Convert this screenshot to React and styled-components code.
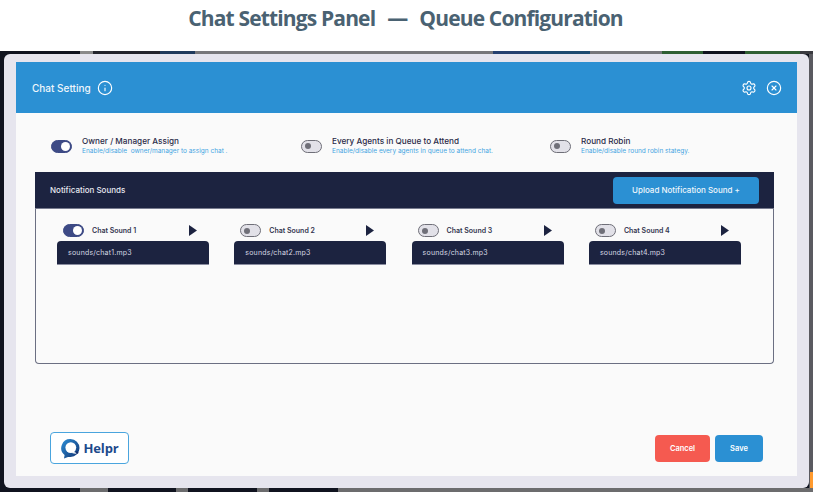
import React from 'react';
import styled, { createGlobalStyle } from 'styled-components';
import { Info, Settings, CircleX } from 'lucide-react';

const GlobalStyle = createGlobalStyle`
  html, body {
    margin: 0;
    padding: 0;
    background: #fff;
  }
  body {
    font-family: Inter, 'Liberation Sans', sans-serif;
  }
  * {
    box-sizing: border-box;
  }
`;

const Page = styled.div`
  width: 816px;
  height: 492px;
  display: flex;
  flex-direction: column;
  overflow: hidden;
  background: #fff;
`;

const PageTitle = styled.h1`
  height: 51px;
  margin: 0;
  padding: 0 5px 16px 0;
  display: flex;
  align-items: center;
  justify-content: center;
  gap: 12px;
  font-family: 'Open Sans', sans-serif;
  font-size: 21px;
  font-weight: 700;
  letter-spacing: -0.85px;
  color: #4a6272;
  white-space: nowrap;
`;

const Backdrop = styled.div`
  width: 813px;
  flex: 1;
  display: flex;
  padding: 3px 4px 4px 4px;
  background-color: #10131f;
  background-image:
    linear-gradient(90deg, #10131f 80px, #8a8a8a 80px, #8a8a8a 93px, #23242c 93px, #23242c 160px, #1f3a5c 160px, #1f3a5c 195px, #77777a 195px, #77777a 493px, #24406f 493px, #24406f 530px, #1c4a70 530px, #1c4a70 590px, #77777a 590px, #77777a 662px, #2f5f33 662px, #2f5f33 703px, #10131f 703px, #10131f 745px, #2f5f33 745px, #2f5f33 800px, #3a3a40 800px),
    linear-gradient(90deg, #10131f 80px, #6c6c6e 80px, #6c6c6e 108px, #10131f 108px, #10131f 176px, #6c6c6e 176px, #6c6c6e 188px, #10131f 188px, #10131f 257px, #6c6c6e 257px, #6c6c6e 269px, #10131f 269px, #10131f 338px, #6c6c6e 338px),
    linear-gradient(#ff9a2e, #ff9a2e),
    linear-gradient(#5a5a60, #5a5a60);
  background-size: 100% 3px, 100% 4px, 3px 20px, 4px 100%;
  background-position: top left, bottom left, bottom right, top right;
  background-repeat: no-repeat;
`;

const Modal = styled.div`
  flex: 1;
  display: flex;
  flex-direction: column;
  padding: 8px 12px 12px;
  background: #e6e5ee;
  border-radius: 6px;
`;

const ModalHeader = styled.header`
  height: 51px;
  flex: none;
  display: flex;
  align-items: center;
  padding: 0 15px 0 16px;
  background: #2b90d3;
  color: #fff;
`;

const ModalTitle = styled.span`
  font-size: 10px;
  font-weight: 500;
  color: #eef6fc;
`;

const InfoIcon = styled(Info)`
  margin-left: 6px;
`;

const CloseIcon = styled(CircleX)`
  margin-left: 9px;
`;

const Spacer = styled.div`
  flex: 1;
`;

const ModalBody = styled.div`
  flex: 1;
  display: flex;
  flex-direction: column;
  padding: 24px 23px 12px 19px;
  background: #fafafa;
`;

const OptionRow = styled.div`
  display: grid;
  grid-template-columns: 250px 249px 1fr;
  padding-left: 16px;
  height: 36px;
`;

const Option = styled.div`
  display: flex;
  align-items: center;
  height: 18px;
  gap: 10px;
`;

const OptionText = styled.div`
  display: flex;
  flex-direction: column;
  gap: 2px;
  margin-bottom: 2px;
`;

const OptionLabel = styled.div`
  font-size: 8.2px;
  line-height: 10px;
  font-weight: 500;
  color: #2a2b48;
  white-space: nowrap;
`;

const OptionHint = styled.div`
  font-size: 6.5px;
  line-height: 7px;
  color: #45a5e2;
  white-space: pre;
`;

const Track = styled.span`
  flex: none;
  display: flex;
  align-items: center;
  justify-content: ${(props) => (props.$on ? 'flex-end' : 'flex-start')};
  width: 21px;
  height: 13px;
  padding: 0 1px 0 3px;
  border-radius: 7px;
  background: ${(props) => (props.$on ? '#3d4a85' : '#e2e1e8')};
  border: 1px solid ${(props) => (props.$on ? '#3d4a85' : '#6f6f78')};
`;

const Knob = styled.span`
  border-radius: 50%;
  width: ${(props) => (props.$on ? 9 : 6)}px;
  height: ${(props) => (props.$on ? 9 : 6)}px;
  background: ${(props) => (props.$on ? '#fff' : '#6f6f78')};
`;

const Panel = styled.section`
  height: 192px;
  flex: none;
  margin-top: -1px;
  display: flex;
  flex-direction: column;
  border: 1px solid #6b6f82;
  border-top: none;
  border-radius: 0 0 4px 4px;
`;

const PanelHeader = styled.div`
  height: 37px;
  flex: none;
  display: flex;
  align-items: center;
  justify-content: space-between;
  margin: 0 -1px;
  padding: 0 15px;
  background: #1c2340;
  border-bottom: 1px solid #777b8e;
`;

const PanelTitle = styled.span`
  font-size: 8px;
  font-weight: 500;
  color: #e8e9f0;
`;

const UploadButton = styled.button`
  width: 146px;
  height: 27px;
  padding: 0;
  border: none;
  border-radius: 4px;
  background: #2b90d3;
  color: #eef6fc;
  font-family: inherit;
  font-size: 8px;
  font-weight: 500;
`;

const SoundGrid = styled.div`
  display: grid;
  grid-template-columns: repeat(4, 152px);
  column-gap: 25.3px;
  padding: 14px 0 0 21px;
`;

const SoundCard = styled.div`
  display: flex;
  flex-direction: column;
`;

const SoundHead = styled.div`
  height: 18px;
  display: flex;
  align-items: center;
  padding: 0 12px 3px 6px;
  gap: 8px;
`;

const SoundName = styled.span`
  flex: 1;
  font-size: 7px;
  font-weight: 600;
  color: #33354f;
`;

const PlayIcon = styled.svg`
  width: 8px;
  height: 11px;
  fill: #1c2340;
`;

const FileBox = styled.div`
  height: 24px;
  display: flex;
  align-items: center;
  padding-left: 11px;
  background: #1c2340;
  border-radius: 4px 4px 0 0;
  border-bottom: 1px solid #8a8da0;
  font-size: 7px;
  letter-spacing: 0.2px;
  color: #d6d8e2;
`;

const Footer = styled.footer`
  margin-top: auto;
  display: flex;
  align-items: center;
  padding: 0 11px 0 15px;
  gap: 5px;
`;

const LogoBox = styled.div`
  width: 79px;
  height: 32px;
  display: flex;
  align-items: center;
  justify-content: center;
  gap: 2px;
  background: #fff;
  border: 1.5px solid #4aa5de;
  border-radius: 4px;
`;

const LogoMark = styled.svg`
  width: 21px;
  height: 21px;
`;

const LogoText = styled.span`
  font-family: 'Open Sans', sans-serif;
  font-size: 13px;
  font-weight: 700;
  letter-spacing: -0.1px;
  color: #1d4a8c;
`;

const FooterButton = styled.button`
  height: 27px;
  width: ${(props) => props.$width}px;
  padding: 0;
  border: none;
  border-radius: 4px;
  background: ${(props) => props.$color};
  color: #fff;
  font-family: inherit;
  font-size: 7.5px;
  font-weight: 600;
`;

const options = [
  { label: 'Owner / Manager Assign', hint: 'Enable/disable  owner/manager to assign chat .', on: true },
  { label: 'Every Agents in Queue to Attend', hint: 'Enable/disable every agents in queue to attend chat.', on: false },
  { label: 'Round Robin', hint: 'Enable/disable round robin stategy.', on: false },
];

const sounds = [
  { name: 'Chat Sound 1', file: 'sounds/chat1.mp3', on: true },
  { name: 'Chat Sound 2', file: 'sounds/chat2.mp3', on: false },
  { name: 'Chat Sound 3', file: 'sounds/chat3.mp3', on: false },
  { name: 'Chat Sound 4', file: 'sounds/chat4.mp3', on: false },
];

const Toggle = ({ on }) => (
  <Track $on={on}>
    <Knob $on={on} />
  </Track>
);

const App = () => (
  <Page>
    <GlobalStyle />
    <PageTitle>
      <span>Chat Settings Panel</span>
      <span>—</span>
      <span>Queue Configuration</span>
    </PageTitle>
    <Backdrop>
      <Modal>
        <ModalHeader>
          <ModalTitle>Chat Setting</ModalTitle>
          <InfoIcon size={16} strokeWidth={1.7} />
          <Spacer />
          <Settings size={16} strokeWidth={1.7} />
          <CloseIcon size={16} strokeWidth={1.7} />
        </ModalHeader>
        <ModalBody>
          <OptionRow>
            {options.map((option) => (
              <Option key={option.label}>
                <Toggle on={option.on} />
                <OptionText>
                  <OptionLabel>{option.label}</OptionLabel>
                  <OptionHint>{option.hint}</OptionHint>
                </OptionText>
              </Option>
            ))}
          </OptionRow>
          <Panel>
            <PanelHeader>
              <PanelTitle>Notification Sounds</PanelTitle>
              <UploadButton>Upload Notification Sound +</UploadButton>
            </PanelHeader>
            <SoundGrid>
              {sounds.map((sound) => (
                <SoundCard key={sound.name}>
                  <SoundHead>
                    <Toggle on={sound.on} />
                    <SoundName>{sound.name}</SoundName>
                    <PlayIcon viewBox="0 0 8 11">
                      <path d="M0 0l8 5.5L0 11z" />
                    </PlayIcon>
                  </SoundHead>
                  <FileBox>{sound.file}</FileBox>
                </SoundCard>
              ))}
            </SoundGrid>
          </Panel>
          <Footer>
            <LogoBox>
              <LogoMark viewBox="0 0 21 21">
                <defs>
                  <linearGradient id="helprMark" x1="1" y1="1" x2="0" y2="0">
                    <stop offset="0" stopColor="#12306e" />
                    <stop offset="1" stopColor="#2b8fd8" />
                  </linearGradient>
                </defs>
                <path d="M10.5 1a9 9 0 0 1 0 18H8l-4 1.6.6-3.6A9 9 0 0 1 10.5 1z" fill="url(#helprMark)" />
                <circle cx="10.8" cy="9.6" r="5.4" fill="#fff" />
                <path d="M12.5 14.6l5 .6" stroke="#fff" strokeWidth="1.4" />
                <circle cx="17" cy="14.6" r="1.4" fill="#12306e" />
              </LogoMark>
              <LogoText>Helpr</LogoText>
            </LogoBox>
            <Spacer />
            <FooterButton $width={55} $color="#f55a50">Cancel</FooterButton>
            <FooterButton $width={48} $color="#2b90d3">Save</FooterButton>
          </Footer>
        </ModalBody>
      </Modal>
    </Backdrop>
  </Page>
);

export default App;
